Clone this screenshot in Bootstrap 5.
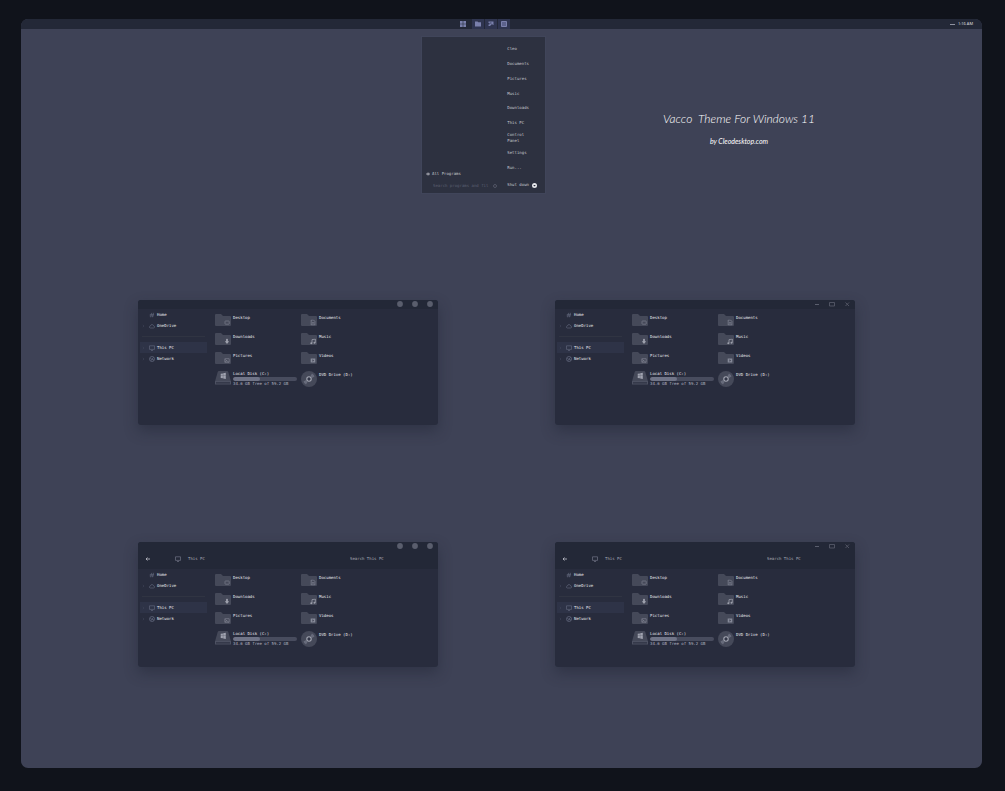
<!DOCTYPE html>
<html lang="en">
<head>
<meta charset="utf-8">
<meta name="viewport" content="width=device-width, initial-scale=1">
<title>Vacco Theme For Windows 11</title>
<link rel="stylesheet" href="https://cdn.jsdelivr.net/npm/bootstrap@5.3.0/dist/css/bootstrap.min.css">
<style>
  :root { --ui: "DejaVu Sans Mono", "Liberation Mono", monospace; --ink: #d3d4da; }
  body { background: #10131b; color: var(--ink); font: 4px/6px var(--ui); }
  a { color: inherit; text-decoration: none; }
  svg { display: block; flex: none; }
  button, input { font: inherit; color: inherit; background: none; border: 0; padding: 0; outline-offset: 1px; }
  input { min-width: 0; }
  input::placeholder { color: inherit; opacity: 1; }
  .shell { padding: 19px 23px 23px 21px; }
  .desktop { background: #3e4256; border-radius: 7px; overflow: hidden; }
  .split { display: grid; grid-template-columns: 400fr 125fr 386fr 50fr; }
  .taskbar { background: #232837; height: 10px; }
  .tasks { gap: 1px; }
  .task { width: 12px; height: 10px; display: flex; align-items: center; justify-content: center; color: #7a80ac; }
  .task.start-button { margin-right: 2px; }
  .task.open { background: #2f3550; }
  .clock { grid-column: 3 / 5; font-family: "Open Sans", sans-serif; padding-right: 9px; gap: 3px; color: #e3e4e8; }
  .dash { width: 5px; height: 1px; background: #8f92a0; }
  .intro { padding-top: 7px; }
  .start { grid-column: 2; background: #2d3140; border: 1px solid #40455a; min-height: 158px; display: grid; grid-template-columns: 86fr 38fr; color: #c6c7ce; }
  .places { display: grid; grid-auto-rows: 1fr; align-items: center; height: 133px; margin-top: 5px; }
  .places a { max-width: 24px; }
  .power { height: 14px; margin-top: 3px; gap: 3px; }
  .hunt { color: #5b5f70; height: 14px; padding: 0 10px 0 11px; }
  .programs { height: 10px; padding-left: 4px; gap: 2px; }
  .headline { padding-top: 74px; color: #fff; text-align: center; font-family: Lato, sans-serif; font-style: italic; }
  .headline h1 { font-size: 12px; line-height: 18px; font-weight: 300; white-space: pre; margin: 0 0 5px; }
  .headline p { font-size: 7px; line-height: 16px; margin: 0; }
  .windows { display: grid; grid-template-columns: 117fr 300fr 117fr 300fr 127fr; row-gap: 117px; margin-top: 106px; padding-bottom: 101px; }
  .pane { background: #282c3d; border-radius: 3px; min-height: 125px; box-shadow: 0 6px 14px #1f233373; overflow: hidden; }
  .pane:nth-child(odd) { grid-column: 2; }
  .pane:nth-child(even) { grid-column: 4; }
  .pane-top { background: #232837; padding-bottom: 1px; }
  .controls { height: 8px; gap: 9px; padding-right: 5px; color: #5a5e6d; }
  .controls button { width: 6px; height: 6px; }
  .address { height: 18px; padding: 0 8px 1px 7px; color: #a9abb6; }
  .address .here { flex: 1; gap: 7px; padding-left: 25px; }
  .address svg { color: #7c8092; }
  .address input { width: 80px; }
  .side { width: 69px; flex: none; padding-left: 2px; }
  .side a { height: 11px; display: flex; align-items: center; gap: 2px; padding-left: 2px; color: #eceDF0; }
  .side a.current { background: #2e3347; }
  .side .g { color: #666b81; }
  .side .arrow { color: #41465b; margin-right: 2px; }
  .side hr { height: 1px; margin: 5px 2px; border: 0; background: #303442; opacity: 1; }
  .files { display: grid; grid-template-columns: 86px minmax(0, 1fr); grid-auto-rows: 19px; padding: 5px 0 0 8px; flex: 1; }
  .files a { display: flex; gap: 2px; color: #e8e9ed; }
  .files .label { padding-top: 1px; }
  .meter { width: 64px; height: 4px; border-radius: 2px; background: #484c5e; overflow: hidden; }
  .meter span { display: block; height: 100%; border-radius: 2px; background: #707487; }
  .free { color: #b6b8c2; }
</style>
</head>
<body>
<svg width="0" height="0" class="position-absolute" aria-hidden="true">
  <symbol id="folder" viewBox="0 0 16 12"><path fill="#454959" d="M1 0h5l2 2h7q1 0 1 1v8q0 1-1 1H1q-1 0-1-1V1q0-1 1-1z"/></symbol>
  <symbol id="s-desktop" viewBox="0 0 6 6"><rect x="1" y="1.5" width="4.200" height="3.200" rx=".5" fill="none" stroke="#868a99" stroke-width=".6"/></symbol>
  <symbol id="s-documents" viewBox="0 0 6 6"><path d="M1.2.5h2.3l1.4 1.4v3.6H1.2zM2.2 3h1.6M2.2 4.3h1.6" fill="none" stroke="#868a99" stroke-width=".7"/></symbol>
  <symbol id="s-downloads" viewBox="0 0 6 6"><path d="M2.1.3h1.8v2.5h1.3L3 5.6.8 2.8h1.3z" fill="#9da0ac"/></symbol>
  <symbol id="s-music" viewBox="0 0 6 6"><path d="M2 4.8V1.2L5.3.5v3.7" fill="none" stroke="#9da0ac" stroke-width=".8"/><circle cx="1.3" cy="4.8" r="1" fill="#9da0ac"/><circle cx="4.5" cy="4.3" r="1" fill="#9da0ac"/></symbol>
  <symbol id="s-pictures" viewBox="0 0 6 6"><path d="M.8 1.2h4.4v3.6H.8zM1 2l3.8 2.6M1 4.5l2-1.5" fill="none" stroke="#868a99" stroke-width=".6"/></symbol>
  <symbol id="s-videos" viewBox="0 0 6 6"><path d="M.7 1h4.6v4H.7z" fill="#868a99"/><path d="M2.4 1.8v2.4L4.2 3z" fill="#454959"/></symbol>
  <symbol id="disk" viewBox="0 0 16 14"><path d="M4 0h8q1 0 1.300 1L16 10.500H0L2.700 1Q3 0 4 0z" fill="#454959"/><path d="M0 10h16v3.500H0z" fill="#4d5162"/><path d="M1 11.200h14v1.200H1z" fill="#2e3243"/><path d="M5.700 2.800l2.200-.4v2.300H5.700zM8.200 2.300l2.600-.5v2.900H8.200zM5.700 5h2.200v2.300l-2.200-.4zM8.200 5h2.600v2.900l-2.600-.5z" fill="#a0a3b0"/></symbol>
  <symbol id="disc" viewBox="0 0 16 16"><circle cx="8" cy="8" r="8" fill="#454959"/><path d="M9.500 5L11 2.500Q13.300 4 13.500 5.500L11 7zM6.500 11L5 13.500Q2.700 12 2.500 10.500L5 9z" fill="#676b7b"/><circle cx="8" cy="8" r="2.200" fill="#333748" stroke="#a4a7b3" stroke-width="1.100"/></symbol>
  <symbol id="home" viewBox="0 0 6 6"><path d="M1.500 5.300L2.800.8M3.300 5.300L4.600.8M.8 2.400h4.300M.6 3.900h4.300" stroke="currentColor" stroke-width=".6"/></symbol>
  <symbol id="cloud" viewBox="0 0 6 6"><path d="M1.300 5Q.3 4.800.4 3.800.6 3 1.400 3 1.800 1.400 3.200 1.500 4.400 1.700 4.500 2.900 5.700 3 5.600 4.100 5.400 5 4.600 5z" fill="none" stroke="currentColor" stroke-width=".6"/></symbol>
  <symbol id="monitor" viewBox="0 0 6 6"><path d="M.5.8h5v3.600h-5zM2 5.500h2" fill="none" stroke="currentColor" stroke-width=".6"/></symbol>
  <symbol id="globe" viewBox="0 0 6 6"><circle cx="3" cy="3" r="2.500" fill="none" stroke="currentColor" stroke-width=".7"/><path d="M1.300 2.300l1.500.9 1.700-1.700M2 4.700l1-1.500 2 1" fill="none" stroke="currentColor" stroke-width=".7"/></symbol>
  <symbol id="chev" viewBox="0 0 3 4"><path d="M.8.800L2 2 .8 3.200" fill="none" stroke="currentColor" stroke-width=".6"/></symbol>
</svg>

<div class="shell min-vh-100 d-flex">
  <main class="desktop flex-grow-1">
    <nav class="taskbar split" aria-label="Taskbar">
      <div></div>
      <div class="tasks d-flex justify-content-center">
        <button class="task start-button" aria-label="Start"><svg width="6" height="6"><path fill="currentColor" d="M0 0h2.700v2.700H0zM3.300 0H6v2.700H3.300zM0 3.300h2.700V6H0zM3.300 3.300H6V6H3.300z"/></svg></button>
        <button class="task open" aria-label="Files"><svg width="6" height="6"><path fill="currentColor" d="M0 .500h2.500l.8.800H6v4.200H0z"/></svg></button>
        <button class="task open" aria-label="Tools"><svg width="6" height="6"><path fill="currentColor" d="M.500.500h5v3.500h-1v-1h-1v1h-1v1h-2v-1.500h1v-1.500h-1z"/><path d="M1.800 2h1.700" stroke="#2f3550" stroke-width=".8"/></svg></button>
        <button class="task open" aria-label="Panel"><svg width="6" height="6"><path d="M.5.500h5v5h-5z" fill="#5c628c" stroke="currentColor"/></svg></button>
      </div>
      <div class="clock d-flex align-items-center justify-content-end"><span class="dash"></span><time>1:16 AM</time></div>
    </nav>

    <header class="split intro">
      <section class="start" aria-label="Start menu">
        <div class="d-flex flex-column justify-content-end">
          <a href="#" class="programs d-flex align-items-center"><svg width="4" height="4"><path d="M0 2h4M1.200 1.200h2M1.200 2.800h2" stroke="currentColor" stroke-width=".7" fill="none"/></svg>All Programs</a>
          <label class="hunt d-flex align-items-center"><input class="flex-grow-1" type="text" aria-label="Search programs" placeholder="Search programs and fil"><svg width="4" height="4"><circle cx="2" cy="2" r="1.500" fill="none" stroke="currentColor" stroke-width=".8"/></svg></label>
        </div>
        <div>
          <nav class="places" aria-label="Places">
            <a href="#">Cleo</a><a href="#">Documents</a><a href="#">Pictures</a><a href="#">Music</a><a href="#">Downloads</a><a href="#">This PC</a><a href="#">Control Panel</a><a href="#">Settings</a><a href="#">Run...</a>
          </nav>
          <button class="power d-flex align-items-center text-nowrap">Shut down <svg width="5" height="5"><circle cx="2.500" cy="2.500" r="2.500" fill="#e6e7eb"/><path d="M1.200 2h2.600L2.500 3.600z" fill="#2d3140"/></svg></button>
        </div>
      </section>
      <div class="headline"><h1>Vacco  Theme For Windows 11</h1><p>by Cleodesktop.com</p></div>
    </header>

    <div class="windows" id="windows"></div>
  </main>
</div>

<script src="https://cdn.jsdelivr.net/npm/bootstrap@5.3.0/dist/js/bootstrap.bundle.min.js"></script>
<script>
  const use = (id, w, h, cls = "") => `<svg class="${cls}" width="${w}" height="${h}" aria-hidden="true"><use href="#${id}"/></svg>`;
  const round = '<circle cx="3" cy="3" r="2.900" fill="currentColor"/>';
  const shapes = {
    round: [round, round, round],
    line: ['<path d="M1 3.500h4" stroke="currentColor"/>', '<path d="M.5 1.500h5v3.500h-5z" fill="none" stroke="currentColor" stroke-width=".8"/>', '<path d="M1.500 1.500l3.500 3.500M5 1.500L1.500 5" stroke="currentColor" stroke-width=".8"/>']
  };
  const names = ["Minimize", "Maximize", "Close"];

  const controls = kind => `<div class="controls d-flex align-items-center justify-content-end">${shapes[kind].map((s, i) =>
    `<button aria-label="${names[i]}"><svg width="6" height="6">${s}</svg></button>`).join("")}</div>`;

  const address = `<div class="address d-flex align-items-center">
    <button aria-label="Back"><svg width="5" height="4"><path d="M5 2H1M2.500.500L1 2l1.500 1.500" fill="none" stroke="#c0c2cb" stroke-width=".8"/></svg></button>
    <div class="here d-flex align-items-center">${use("monitor", 6, 6)}<span>This PC</span></div>
    <input type="search" aria-label="Search This PC" placeholder="Search This PC"></div>`;

  const place = (name, icon, extra = "", arrow = true) =>
    `<a href="#" class="${extra}">${use("chev", 3, 4, "arrow" + (arrow ? "" : " invisible"))}${use(icon, 6, 6, "g")}${name}</a>`;

  const folder = name => `<a href="#"><svg width="16" height="12" aria-hidden="true"><use href="#folder"/><use href="#s-${name.toLowerCase()}" x="9" y="5.500" width="6" height="6"/></svg><span class="label">${name}</span></a>`;

  const pane = ([kind, bar]) => `<section class="pane" aria-label="This PC">
    <div class="pane-top">${controls(kind)}${bar ? address : ""}</div>
    <div class="d-flex">
      <nav class="side">${place("Home", "home", "", false)}${place("OneDrive", "cloud")}<hr>${place("This PC", "monitor", "current")}${place("Network", "globe")}</nav>
      <div class="files">
        ${["Desktop", "Documents", "Downloads", "Music", "Pictures", "Videos"].map(folder).join("")}
        <a href="#">${use("disk", 16, 14)}<span>Local Disk (C:)<span class="meter d-block"><span style="width:42%"></span></span><span class="free d-block text-nowrap">34.6 GB free of 59.2 GB</span></span></a>
        <a href="#">${use("disc", 16, 16)}<span class="label">DVD Drive (D:)</span></a>
      </div>
    </div></section>`;

  document.getElementById("windows").innerHTML =
    [["round", false], ["line", false], ["round", true], ["line", true]].map(pane).join("");
</script>
</body>
</html>
